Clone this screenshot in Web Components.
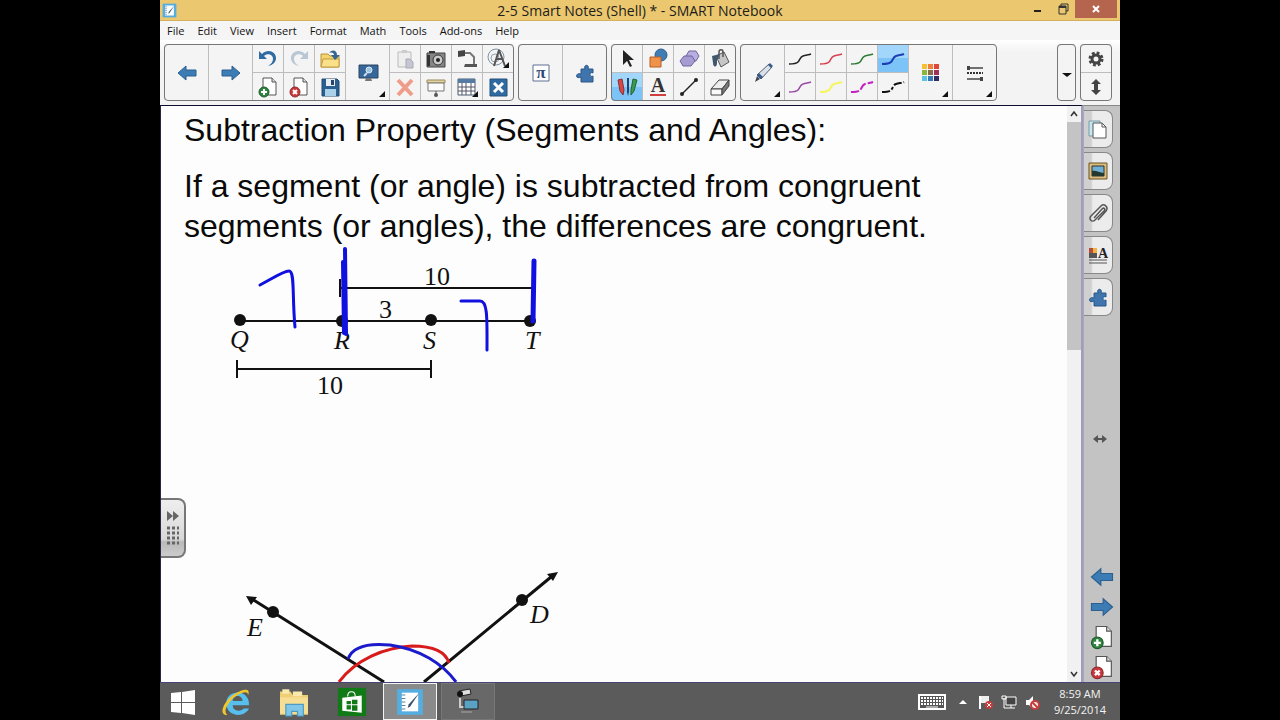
<!DOCTYPE html>
<html lang="en">
<head>
<meta charset="utf-8">
<title>2-5 Smart Notes (Shell) * - SMART Notebook</title>
<style>
  html, body {
    height: 100%;
    margin: 0;
    background: #000;
  }
  body {
    font-family: "Open Sans", "Noto Sans", sans-serif;
    color: #1c1c1c;
  }
</style>
</head>
<body>
<notebook-window></notebook-window>

<script>
// every icon is drawn on a 24 x 24 grid
const PAGE = '<path d="M7 3h9l4 4v13H7z" fill="#fff" stroke="#555"/><path d="M16 3v4h4" fill="#ddd" stroke="#555"/>'
const PUZZLE = '<path d="M8 8h4c-2-5 5-5 3 0h5v4c-4-2-4 5 0 3v6H8v-5c-6 3-6-5 0-3z" fill="#3f74ad" stroke="#2a5688"/>'
const curve = (color, width = 1.5, dash = 'none') =>
  `<path d="M1 17c3 0 7 0 9-2s2-5 5-6 6-1 8-2" fill="none" stroke="${color}" stroke-width="${width}" stroke-dasharray="${dash}"/>`

const ICONS = {
  back: '<path d="M3 12l8-7v4h10v6H11v4z" fill="#3c7cb5" stroke="#2d5f90"/>',
  next: '<path d="M21 12l-8-7v4H3v6h10v4z" fill="#3c7cb5" stroke="#2d5f90"/>',
  undo: '<path d="M3 4v8h8l-3-3c3-3 9-2 9 3 0 3-2 5-5 7 5-1 8-4 8-8 0-6-8-10-14-4z" fill="#2e6ba3"/>',
  redo: '<path d="M21 4v8h-8l3-3c-3-3-9-2-9 3 0 3 2 5 5 7-5-1-8-4-8-8 0-6 8-10 14-4z" fill="#b9c6d4"/>',
  open: '<path d="M3 7h7l2 2h9v11H3z" fill="#f5d36e" stroke="#b8923a"/><path d="M3 20l2-8h16v8z" fill="#fbe08c" stroke="#c39b3d"/><path d="M11 6c3-4 8-3 8 2h3l-5 5-4-5h3c0-2-2-3-5-2z" fill="#38658f"/>',
  addPage: PAGE + '<circle cx="8" cy="17" r="5" fill="#2e8440" stroke="#1f5c2c"/><path d="M8 14v6M5 17h6" stroke="#fff" stroke-width="2"/>',
  delPage: PAGE + '<circle cx="8" cy="17" r="5" fill="#c9383c" stroke="#8f2a2c"/><path d="M6 15l4 4M10 15l-4 4" stroke="#fff" stroke-width="2"/>',
  save: '<path d="M4 4h15l2 2v15H4z" fill="#2b5f90" stroke="#244c72"/><path d="M8 4h9v7H8z" fill="#e8eef4"/><path d="M13 5h3v5h-3z" fill="#27466a"/><path d="M7 14h11v7H7z" fill="#a9d2ea"/>',
  screen: '<path d="M3 4h19v13H3z" fill="#37679a" stroke="#28465f"/><path d="M10 17h5l1 3H9z" fill="#777"/><circle cx="13" cy="9" r="3" fill="#9fc6e4" stroke="#dceaf5"/><path d="M8 15l3-3" stroke="#cde" stroke-width="2"/>',
  paste: '<path d="M5 5h13v15H5z" fill="#eee" stroke="#bbb"/><path d="M9 3h5v3H9z" fill="#ccc"/><path d="M13 12h4l3 3v6h-7z" fill="#c4c6d8" stroke="#aaa"/>',
  cross: '<path d="M5 5l14 15M19 5L5 20" stroke="#ef9c8a" stroke-width="4"/>',
  camera: '<path d="M3 6h18v14H3z" fill="#858585" stroke="#444"/><path d="M5 4h6v2H5zM3 8h3v11H3z" fill="#333"/><circle cx="14" cy="13" r="5" fill="#ccc" stroke="#333"/><circle cx="14" cy="13" r="2" fill="#222"/>',
  shade: '<path d="M3 5h18v3H3z" fill="#e4d2a0" stroke="#9a8a60"/><path d="M4 8h16v8H4z" fill="#fafafa" stroke="#777"/><path d="M12 16v3" stroke="#555"/><circle cx="12" cy="20" r="2" fill="#555"/>',
  docCam: '<path d="M3 4l7-1v6l-7 1z" fill="#444"/><path d="M10 6h5l4 4v8" fill="none" stroke="#777" stroke-width="2"/><path d="M10 17h12v3H9z" fill="#555"/>',
  table: '<path d="M3 4h17v16H3z" fill="#fff" stroke="#4a5a70"/><path d="M3 4h17v4H3z" fill="#557ba3"/><path d="M3 12h17M3 16h17M7 8v12M11 8v12M16 8v12" stroke="#556"/>',
  measure: '<circle cx="10" cy="10" r="8" fill="none" stroke="#7e93a5"/><circle cx="9" cy="11" r="4" fill="none" stroke="#90a4b4"/><path d="M13 3l-5 16M13 3l6 16M10 12h7" fill="none" stroke="#555" stroke-width="2"/>',
  arrowsBox: '<path d="M4 4h17v17H4z" fill="#2f6aa0" stroke="#24507a"/><path d="M8 8l9 9M17 8l-9 9" stroke="#fff" stroke-width="3"/>',
  pi: '<path d="M4 4h16v16H4z" fill="#fff" stroke="#5e7191"/><text x="12" y="17" text-anchor="middle" font-family="Liberation Serif, serif" font-size="17" font-weight="700" fill="#2b4a78">π</text>',
  puzzle: PUZZLE,
  select: '<path d="M8 3v15l4-4 3 6 2-1-3-6h5z" fill="#222"/>',
  shapes: '<circle cx="15" cy="8" r="6" fill="#3f7db5" stroke="#2d5f8d"/><path d="M4 10h11v10H4z" fill="#f1924a" stroke="#b55f26"/>',
  poly: '<path d="M12 4h7l3 5-3 5h-7l-3-5z" fill="#b9aee0" stroke="#6f659d"/><path d="M7 9h8l3 5-4 5H6l-3-5z" fill="#a79bd2" stroke="#6f659d"/>',
  fill: '<path d="M8 9l8-4 5 10-8 5z" fill="#c6c6c6" stroke="#555"/><path d="M11 12V5c0-3 4-3 4 0v5" fill="none" stroke="#555" stroke-width="1.5"/><path d="M4 9l8-2-3 6v4c-1 4-4 3-4-1z" fill="#40576e"/>',
  pens: '<path d="M3 5l4-1 2 11-1 5-3-4z" fill="#d94848" stroke="#8b2e2e"/><path d="M12 3h2v14l-1 4-1-4z" fill="#26456b"/><path d="M18 4l4 1-3 11-3 4v-5z" fill="#379a4c" stroke="#226530"/>',
  text: '<text x="12" y="17" text-anchor="middle" font-family="Liberation Serif, serif" font-size="20" font-weight="700" fill="#333">A</text><path d="M4 19h16v2H4z" fill="#cf3f3f"/>',
  line: '<path d="M5 19L19 5" stroke="#222" stroke-width="1.5"/><circle cx="5" cy="19" r="2" fill="#222"/><circle cx="19" cy="5" r="2" fill="#222"/>',
  eraser: '<path d="M3 14l8-9h10l-7 9z" fill="#eee" stroke="#444"/><path d="M3 14h11v6H3z" fill="#fafafa" stroke="#444"/><path d="M14 14l7-9v6l-7 9z" fill="#777" stroke="#444"/>',
  pen: '<path d="M18 3l3 3L10 18l-4-4z" fill="#dbe1e7" stroke="#4d6078"/><path d="M8 12l4 4-2 2-4-4zM17 4l3 3 2-2-3-3z" fill="#375c8a"/><path d="M6 15l3 3-5 3z" fill="#445"/>',
  black: curve('#222'),
  red: curve('#d84050'),
  green: curve('#2d7c37'),
  blue: curve('#1d3fb5', 2),
  purple: curve('#9a4aa6'),
  yellow: curve('#f5f560', 2),
  magenta: curve('#c31fc3', 2, '8 2'),
  dashed: curve('#111', 2, '8 2 3 2'),
  palette: [
    ['#f6c02f', '#ef7f3a', '#e04637'],
    ['#8cb53c', '#8a6a4d', '#a13058'],
    ['#59c3ea', '#3479b8', '#312c66']
  ].map((row, y) => row.map((c, x) => `<path d="M${3 + x * 6} ${3 + y * 6}h5v5h-5z" fill="${c}"/>`).join('')).join(''),
  lines: '<path d="M4 7h16M4 18h16" stroke="#444" stroke-width="1.5"/><path d="M4 12h16" stroke="#333" stroke-width="2" stroke-dasharray="2 1"/><path d="M4 5h3v4H4zM17 16h3v4h-3z" fill="#444"/>',
  caret: '<path d="M7 12h10l-5 4z" fill="#111"/>',
  gear: '<circle cx="12" cy="12" r="4" fill="none" stroke="#444" stroke-width="3"/><circle cx="12" cy="12" r="6" fill="none" stroke="#444" stroke-width="3" stroke-dasharray="2.7 2"/>',
  upDown: '<path d="M12 4l5 5h-3v6h3l-5 5-5-5h3V9H7z" fill="#444"/>',
  leftRight: '<path d="M5 12l5-4v3h4V8l5 4-5 4v-3h-4v3z" fill="#555"/>',
  pages: '<path d="M3 4h11v15H3z" fill="#c4e8f2" stroke="#7a9aa6"/><path d="M7 6h9l4 4v11H7z" fill="#fff" stroke="#555"/><path d="M16 6v4h4" fill="none" stroke="#555"/>',
  gallery: '<path d="M3 4h18v16H3z" fill="#d9bd7c" stroke="#6d5325"/><path d="M6 7h12v10H6z" fill="#6fb0d4" stroke="#333"/><path d="M6 17v-5c4-1 7 2 12 2v3z" fill="#23392f"/>',
  clip: '<path d="M8 17l8-9c2-2 4 0 2 2l-9 9c-3 3-7-1-4-4L15 5c3-3 8 1 5 5l-8 9" fill="none" stroke="#555" stroke-width="1.5"/>',
  props: '<path d="M3 5h4v5H3z" fill="#b84c3a"/><path d="M7 5h4v5H7z" fill="#efb441"/><path d="M3 10h8v5H3z" fill="#555"/><text x="17" y="15" text-anchor="middle" font-family="Liberation Serif, serif" font-size="14" font-weight="700" fill="#222">A</text><path d="M3 17h18M3 20h18" stroke="#555" stroke-width="1"/>',
  notebook: '<path d="M1 1h22v22H1z" fill="#55aee0"/><path d="M5 4h14v16H5z" fill="#fff"/><path d="M5 6h3M5 9h3M5 12h3M5 15h3M5 18h3" stroke="#57859f"/><path d="M20 4l-8 12-2 1 1-3z" fill="#34506b"/>',
  windows: '<path d="M0 3l10-1v10H0zM11 2l13-2v12H11zM0 13h10v10L0 22zM11 13h13v12l-13-2z" fill="#fff"/>',
  ie: '<path d="M24 15H9c0 6 8 6 10 3h5C20 27 3 26 3 13 3 0 25-1 24 15zM9 11h9c0-6-9-6-9 0z" fill="#56bfee"/><path d="M4 24C-5 24 1 11 10 5s16-6 13 1c1-6-10-2-16 5-5 6-6 10-3 13z" fill="#f3c72c"/>',
  explorer: '<path d="M0 3h9l2 3h13v17H0z" fill="#efcf74"/><path d="M2 1h6v4H2zM11 3h8v4h-8z" fill="#f9e9ad"/><path d="M0 8h24v14H0z" fill="#f6df94"/><path d="M5 14h15v10h-5v-4h-5v4H5z" fill="#7fc6e8" stroke="#4c9ac4"/>',
  store: '<path d="M-1-1h26v26H-1z" fill="#0f7a16"/><path d="M3 8l18-2v16L3 20z" fill="#fff"/><path d="M8 7c0-6 7-6 7 0" fill="none" stroke="#fff"/><path d="M7 11h4v3H7zM12 10h5v4h-5zM7 15h4v4H7zM12 15h5v5h-5z" fill="#0f7a16"/>',
  recorder: '<path d="M3 1l11-2 1 5-10 2z" fill="#ddd" stroke="#222"/><circle cx="4" cy="4" r="3" fill="#111"/><path d="M4 8v9h5" fill="none" stroke="#ccc" stroke-width="2"/><path d="M8 10h14v9H8z" fill="#5ba1c4" stroke="#222"/><path d="M5 21h11v2H5z" fill="#888"/>',
  keyboard: '<path d="M-2 4h28v16H-2z" fill="#fff"/><path d="M0 6h24v12H0z" fill="#555"/><path d="M1 8h22M1 11h22M1 14h22" stroke="#fff" stroke-width="2" stroke-dasharray="2 1"/><path d="M6 17h12" stroke="#fff"/>',
  flag: '<path d="M6 6v13" stroke="#fff" stroke-width="2"/><path d="M7 6h8v7H7z" fill="#eee"/><circle cx="15" cy="15" r="4" fill="#c83c3c"/><path d="M13 13l4 4M17 13l-4 4" stroke="#fff"/>',
  network: '<path d="M9 7h10v8H9z" fill="#444" stroke="#fff"/><path d="M14 15v3M10 18h8M7 8v10h3M5 6h4v3H5z" fill="none" stroke="#fff"/>',
  sound: '<path d="M6 10h3l4-4v13l-4-4H6z" fill="#fff"/><circle cx="15" cy="15" r="4" fill="#eee" stroke="#c83c3c" stroke-width="2"/><path d="M12 12l6 6" stroke="#c83c3c" stroke-width="2"/>',
  trayUp: '<path d="M8 14l4-4 4 4z" fill="#fff"/>',
  scrollUp: '<path d="M9 14l3-4 3 4" fill="none" stroke="#333" stroke-width="1.5"/>',
  scrollDown: '<path d="M9 10l3 4 3-4" fill="none" stroke="#333" stroke-width="1.5"/>',
  minimize: '<path d="M8 13h7v2H8z" fill="#222"/>',
  restore: '<path d="M10 10V7h7v7h-2M8 9h7v8H8z" fill="none" stroke="#333"/><path d="M8 10h7" stroke="#333" stroke-width="2"/>',
  close: '<path d="M9 9l6 6M15 9l-6 6" stroke="#fff" stroke-width="2"/>'
}

function icon (name, size = 24) {
  return `<svg width="${size}" height="${size}" viewBox="0 0 24 24" overflow="visible" aria-hidden="true">${ICONS[name]}</svg>`
}

// <icon-button icon="save" label="Save">: plain button around one icon
class IconButton extends HTMLElement {
  constructor () {
    super()
    this.attachShadow({ mode: 'open' })
  }

  connectedCallback () {
    const size = this.getAttribute('size') || 24
    this.shadowRoot.innerHTML = `
      <style>
        :host {
          display: block;
        }
        button {
          display: flex;
          align-items: center;
          justify-content: center;
          width: 100%;
          height: 100%;
          padding: 0;
          border: 0;
          background: none;
        }
        svg {
          display: block;
          flex: none;
        }
      </style>
      <button type="button" aria-label="${this.getAttribute('label')}">${icon(this.getAttribute('icon'), size)}</button>
    `
  }
}
customElements.define('icon-button', IconButton)

class ToolButton extends HTMLElement {
  constructor () {
    super()
    this.attachShadow({ mode: 'open' })
  }

  connectedCallback () {
    const name = this.getAttribute('icon')
    this.shadowRoot.innerHTML = `
      <style>
        :host {
          display: block;
          width: 31px;
          box-sizing: border-box;
          border-left: 1px solid #bdbdbd;
          border-top: 1px solid #bdbdbd;
        }
        :host([big]) {
          width: 44px;
          grid-row: span 2;
        }
        :host([narrow]) {
          width: 18px;
          grid-row: span 2;
        }
        :host([selected]) {
          background: linear-gradient(#a2d6fb 50%, #7cc3f7 50%);
        }
        button {
          display: flex;
          align-items: center;
          justify-content: center;
          position: relative;
          width: 100%;
          height: 100%;
          padding: 0;
          border: 0;
          background: none;
        }
        svg {
          display: block;
          flex: none;
        }
        :host([more]) button::after {
          content: "";
          position: absolute;
          right: 4px;
          bottom: 4px;
          border: 3px solid #111;
          border-left-color: transparent;
          border-top-color: transparent;
        }
      </style>
      <button type="button" aria-label="${this.getAttribute('label') || name}">${icon(name)}</button>
    `
  }
}
customElements.define('tool-button', ToolButton)

class ToolGroup extends HTMLElement {
  constructor () {
    super()
    this.attachShadow({ mode: 'open' }).innerHTML = `
      <style>
        :host {
          display: grid;
          grid-auto-flow: column;
          grid-template-rows: 28px 29px;
          padding-right: 1px;
          border-radius: 4px;
          background: #f4f4f4;
          outline: 1px solid #777;
          outline-offset: -1px;
          overflow: hidden;
        }
      </style>
      <slot></slot>
    `
  }
}
customElements.define('tool-group', ToolGroup)

class ToolBar extends HTMLElement {
  constructor () {
    super()
    this.attachShadow({ mode: 'open' }).innerHTML = `
      <style>
        :host {
          display: flex;
          gap: 4px;
          padding: 4px 8px 4px 4px;
          background: linear-gradient(#fff, #f3f3f3 12px);
        }
        .spacer {
          flex: 1;
        }
      </style>
      <tool-group>
        <tool-button big icon="back"></tool-button>
        <tool-button big icon="next"></tool-button>
        <tool-button icon="undo"></tool-button>
        <tool-button icon="addPage"></tool-button>
        <tool-button icon="redo"></tool-button>
        <tool-button icon="delPage"></tool-button>
        <tool-button icon="open"></tool-button>
        <tool-button icon="save"></tool-button>
        <tool-button big more icon="screen"></tool-button>
        <tool-button icon="paste"></tool-button>
        <tool-button icon="cross" label="delete"></tool-button>
        <tool-button icon="camera"></tool-button>
        <tool-button icon="shade"></tool-button>
        <tool-button icon="docCam"></tool-button>
        <tool-button more icon="table"></tool-button>
        <tool-button more icon="measure"></tool-button>
        <tool-button icon="arrowsBox"></tool-button>
      </tool-group>
      <tool-group>
        <tool-button big icon="pi" label="math"></tool-button>
        <tool-button big icon="puzzle" label="add-ons"></tool-button>
      </tool-group>
      <tool-group>
        <tool-button icon="select"></tool-button>
        <tool-button selected icon="pens"></tool-button>
        <tool-button icon="shapes"></tool-button>
        <tool-button icon="text"></tool-button>
        <tool-button icon="poly"></tool-button>
        <tool-button icon="line"></tool-button>
        <tool-button icon="fill"></tool-button>
        <tool-button icon="eraser"></tool-button>
      </tool-group>
      <tool-group>
        <tool-button big more icon="pen"></tool-button>
        <tool-button icon="black"></tool-button>
        <tool-button icon="purple"></tool-button>
        <tool-button icon="red"></tool-button>
        <tool-button icon="yellow"></tool-button>
        <tool-button icon="green"></tool-button>
        <tool-button icon="magenta"></tool-button>
        <tool-button selected icon="blue"></tool-button>
        <tool-button icon="dashed"></tool-button>
        <tool-button big more icon="palette"></tool-button>
        <tool-button big more icon="lines"></tool-button>
      </tool-group>
      <div class="spacer"></div>
      <tool-group>
        <tool-button narrow icon="caret" label="more"></tool-button>
      </tool-group>
      <tool-group>
        <tool-button icon="gear"></tool-button>
        <tool-button icon="upDown"></tool-button>
      </tool-group>
    `
  }
}
customElements.define('tool-bar', ToolBar)

class TitleBar extends HTMLElement {
  constructor () {
    super()
    this.attachShadow({ mode: 'open' }).innerHTML = `
      <style>
        :host {
          display: grid;
          grid-template-columns: 1fr auto 1fr;
          height: 21px;
          background: #ebc76f;
          border-bottom: 1px solid #d5b05c;
          box-sizing: border-box;
        }
        .logo {
          padding: 3px 2px;
        }
        .logo svg {
          display: block;
        }
        h1 {
          margin: 0;
          font-size: 14px;
          font-weight: 400;
          line-height: 21px;
        }
        .controls {
          display: flex;
          justify-content: flex-end;
          padding-right: 3px;
        }
        icon-button {
          width: 25px;
          height: 18px;
        }
        .close {
          width: 42px;
          background: #b5654d;
        }
      </style>
      <div class="logo">${icon('notebook', 15)}</div>
      <h1><slot></slot></h1>
      <div class="controls">
        <icon-button icon="minimize" label="Minimize"></icon-button>
        <icon-button icon="restore" label="Restore"></icon-button>
        <icon-button class="close" icon="close" label="Close"></icon-button>
      </div>
    `
  }
}
customElements.define('title-bar', TitleBar)

class MenuBar extends HTMLElement {
  constructor () {
    super()
    const items = ['File', 'Edit', 'View', 'Insert', 'Format', 'Math', 'Tools', 'Add-ons', 'Help']
    this.attachShadow({ mode: 'open' }).innerHTML = `
      <style>
        :host {
          display: flex;
          gap: 13px;
          height: 19px;
          padding-left: 7px;
          background: #f5f5f5;
        }
        button {
          padding: 0;
          border: 0;
          background: none;
          font: 11px/19px "Open Sans", "Noto Sans", sans-serif;
          color: #111;
        }
      </style>
      ${items.map(item => `<button type="button">${item}</button>`).join('')}
    `
  }
}
customElements.define('menu-bar', MenuBar)

class NotePage extends HTMLElement {
  constructor () {
    super()
    this.attachShadow({ mode: 'open' }).innerHTML = `
      <style>
        :host {
          display: block;
          position: relative;
          overflow: hidden;
          padding: 4px 0 0 23px;
          background: #fdfdfd;
          border-top: 1px solid #0c0c2c;
          border-left: 1px solid #2a2440;
          font-family: "Liberation Sans", Arial, sans-serif;
          color: #0a0a0a;
        }
        h2, p {
          margin: 0 0 16px;
          font-size: 32px;
          font-weight: 400;
          line-height: 40px;
        }
        p {
          max-width: 760px;
          margin: 0;
        }
        .diagram {
          display: block;
          font: 26px "Liberation Serif", "Times New Roman", serif;
        }
        .diagram .point {
          font-style: italic;
        }
        .handle {
          display: flex;
          flex-direction: column;
          align-items: center;
          justify-content: center;
          position: absolute;
          left: 0;
          top: 68%;
          width: 25px;
          height: 60px;
          padding: 0;
          border: 2px solid #777;
          border-left: 0;
          border-radius: 0 8px 8px 0;
          background: linear-gradient(#eee, #d8d8d8 70%, #b9b9b9 75%, #ccc);
        }
      </style>
      <h2>Subtraction Property (Segments and Angles):</h2>
      <p>If a segment (or angle) is subtracted from congruent segments (or angles), the differences are congruent.</p>
      <svg class="diagram" width="480" height="436" viewBox="184 246 480 436" role="img" aria-label="Segment QT and angle diagram">
        <g stroke="#111" stroke-width="2" fill="none">
          <path d="M240 321H530M341 288H534M340 279V297M237 369H431M237 360V378M431 360V378"/>
          <path d="M252 599L384 682M551 577L424 682" stroke-width="3"/>
        </g>
        <g fill="#111">
          <circle cx="240" cy="320" r="6"/>
          <circle cx="342" cy="321" r="6"/>
          <circle cx="431" cy="320" r="6"/>
          <circle cx="530" cy="321" r="6"/>
          <circle cx="273" cy="612" r="6"/>
          <circle cx="522" cy="600" r="6"/>
          <path d="M246 596l11 1-6 8zM558 572l-5 9-6-7z"/>
          <text class="point" x="230" y="348">Q</text>
          <text class="point" x="334" y="349">R</text>
          <text class="point" x="423" y="349">S</text>
          <text class="point" x="525" y="349">T</text>
          <text class="point" x="247" y="636">E</text>
          <text class="point" x="530" y="623">D</text>
          <text x="424" y="285">10</text>
          <text x="379" y="318">3</text>
          <text x="317" y="394">10</text>
        </g>
        <g stroke="#1010e0" stroke-width="3" fill="none" stroke-linecap="round" stroke-linejoin="round">
          <path d="M260 285C270 280 283 271 289 271C295 271 292 295 295 327"/>
          <path d="M461 301H480C488 301 487 320 487 350"/>
          <path d="M345 249L346 334M343 262L344 333" stroke-width="4"/>
          <path d="M534 261L533 321" stroke-width="5"/>
        </g>
        <path d="M339 682C355 660 385 647 412 646C435 646 446 653 449 663" fill="none" stroke="#d81c1c" stroke-width="3"/>
        <path d="M348 659C353 645 370 643 390 645C420 649 443 664 456 682" fill="none" stroke="#1b1bcc" stroke-width="3"/>
      </svg>
      <button class="handle" type="button" aria-label="Show page controls">
        <svg width="16" height="36" viewBox="0 0 16 36">
          <path d="M2 1l6 5-6 5zM8 1l6 5-6 5z" fill="#666"/>
          <path d="M2 18h12M2 23h12M2 28h12M2 33h12" stroke="#666" stroke-width="3" stroke-dasharray="3 2"/>
        </svg>
      </button>
    `
  }
}
customElements.define('note-page', NotePage)

class ScrollTrack extends HTMLElement {
  constructor () {
    super()
    this.attachShadow({ mode: 'open' }).innerHTML = `
      <style>
        :host {
          display: flex;
          flex-direction: column;
          width: 14px;
          background: #f1f1f1;
          border-top: 1px solid #0c0c2c;
          border-right: 2px solid #a19cc4;
        }
        icon-button {
          height: 16px;
          overflow: hidden;
        }
        .track {
          flex: 1;
        }
        .thumb {
          height: 42%;
          background: #c4c4c4;
        }
      </style>
      <icon-button icon="scrollUp" label="Scroll up"></icon-button>
      <div class="track"><div class="thumb"></div></div>
      <icon-button icon="scrollDown" label="Scroll down"></icon-button>
    `
  }
}
customElements.define('scroll-track', ScrollTrack)

class SideBar extends HTMLElement {
  constructor () {
    super()
    this.attachShadow({ mode: 'open' }).innerHTML = `
      <style>
        :host {
          display: flex;
          flex-direction: column;
          width: 37px;
          background: #c3c3c3;
          border-top: 1px solid #888;
          border-left: 1px solid #aaa;
          box-sizing: border-box;
        }
        .tabs {
          display: grid;
          gap: 4px;
          padding: 4px 7px 0 0;
        }
        .tabs icon-button {
          height: 38px;
          box-sizing: border-box;
          border: 1px solid #888;
          border-left: 0;
          border-radius: 0 8px 8px 0;
          background: linear-gradient(90deg, #d0d0d0 7px, #ececec 9px);
        }
        .resize {
          flex: 1;
          padding-right: 4px;
        }
        .pages {
          display: grid;
          grid-auto-rows: 30px;
        }
      </style>
      <div class="tabs">
        <icon-button icon="pages" label="Page Sorter"></icon-button>
        <icon-button icon="gallery" label="Gallery"></icon-button>
        <icon-button icon="clip" label="Attachments"></icon-button>
        <icon-button icon="props" label="Properties"></icon-button>
        <icon-button icon="puzzle" label="Add-ons"></icon-button>
      </div>
      <icon-button class="resize" icon="leftRight" label="Resize"></icon-button>
      <div class="pages">
        <icon-button size="28" icon="back" label="Previous page"></icon-button>
        <icon-button size="28" icon="next" label="Next page"></icon-button>
        <icon-button size="28" icon="addPage" label="Add page"></icon-button>
        <icon-button size="28" icon="delPage" label="Delete page"></icon-button>
      </div>
    `
  }
}
customElements.define('side-bar', SideBar)

class TaskBar extends HTMLElement {
  constructor () {
    super()
    this.attachShadow({ mode: 'open' }).innerHTML = `
      <style>
        :host {
          display: flex;
          justify-content: space-between;
          height: 38px;
          background: #5b5b5b;
          border-top: 1px solid #47457a;
          box-sizing: border-box;
          color: #f4f4f4;
        }
        .apps, .tray {
          display: flex;
          align-items: stretch;
        }
        .apps {
          gap: 4px;
        }
        .apps icon-button {
          width: 54px;
          box-sizing: border-box;
        }
        .apps .start {
          width: 45px;
        }
        .apps .active {
          border: 1px solid #f4f4f4;
          background: #8a8a8a;
        }
        .apps .running {
          border: 1px solid #777;
          background: #686868;
        }
        .tray {
          padding-right: 14px;
        }
        .tray icon-button {
          width: 23px;
        }
        .tray .keyboard {
          width: 40px;
        }
        time {
          padding: 3px 0 0 10px;
          font-size: 11px;
          line-height: 16px;
          text-align: center;
        }
      </style>
      <div class="apps">
        <icon-button class="start" icon="windows" label="Start"></icon-button>
        <icon-button size="26" icon="ie" label="Internet Explorer"></icon-button>
        <icon-button size="28" icon="explorer" label="File Explorer"></icon-button>
        <icon-button size="26" icon="store" label="Store"></icon-button>
        <icon-button class="active" size="28" icon="notebook" label="SMART Notebook"></icon-button>
        <icon-button class="running" icon="recorder" label="Recorder"></icon-button>
      </div>
      <div class="tray">
        <icon-button class="keyboard" icon="keyboard" label="Touch keyboard"></icon-button>
        <icon-button icon="trayUp" label="Show hidden icons"></icon-button>
        <icon-button icon="flag" label="Action Center"></icon-button>
        <icon-button icon="network" label="Network"></icon-button>
        <icon-button icon="sound" label="Volume"></icon-button>
        <time>8:59 AM<br>9/25/2014</time>
      </div>
    `
  }
}
customElements.define('task-bar', TaskBar)

class NotebookWindow extends HTMLElement {
  constructor () {
    super()
    this.attachShadow({ mode: 'open' }).innerHTML = `
      <style>
        :host {
          display: flex;
          flex-direction: column;
          height: 100vh;
          margin: 0 12.5%;
        }
        main {
          display: flex;
          flex: 1;
          min-height: 0;
        }
        note-page {
          flex: 1;
          min-width: 0;
        }
      </style>
      <title-bar>2-5 Smart Notes (Shell) * - SMART Notebook</title-bar>
      <menu-bar></menu-bar>
      <tool-bar></tool-bar>
      <main>
        <note-page></note-page>
        <scroll-track></scroll-track>
        <side-bar></side-bar>
      </main>
      <task-bar></task-bar>
    `
  }
}
customElements.define('notebook-window', NotebookWindow)
</script>
</body>
</html>
